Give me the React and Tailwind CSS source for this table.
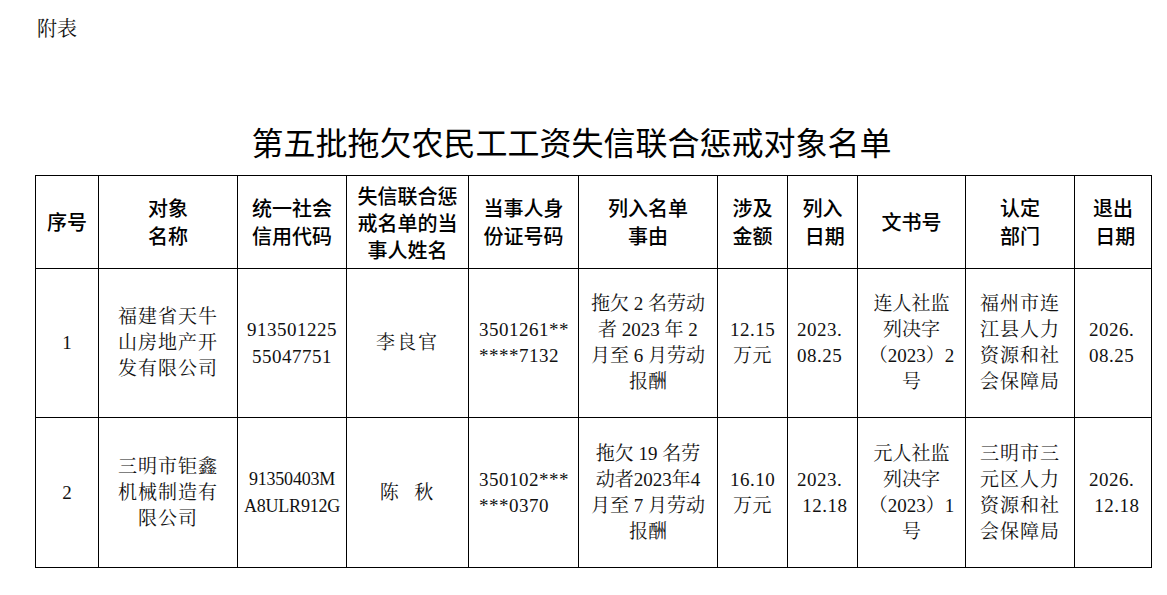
const serif = { fontFamily: '"Liberation Serif", "Noto Serif CJK SC", "Noto Sans CJK SC", serif' };

const cols = [63, 139, 109, 122, 110, 139, 70, 70, 108, 109, 77];

const rows = [
  {
    no: "1",
    name: ["福建省天牛", "山房地产开", "发有限公司"],
    code: ["913501225", "55047751"],
    codeSize: " tracking-[0.5px]",
    person: "李良官",
    id: ["3501261**", "****7132"],
    reason: ["拖欠 2 名劳动", "者 2023 年 2", "月至 6 月劳动", "报酬"],
    amount: ["12.15", "万元"],
    date: ["2023.", "08.25"],
    doc: ["连人社监", "列决字", "（2023）2", "号"],
    dept: ["福州市连", "江县人力", "资源和社", "会保障局"],
    exit: ["2026.", "08.25"],
  },
  {
    no: "2",
    name: ["三明市钜鑫", "机械制造有", "限公司"],
    code: ["91350403M", "A8ULR912G"],
    codeSize: " !text-[18px] tracking-[-0.2px]",
    person: "陈\u00a0\u00a0秋",
    id: ["350102***", "***0370"],
    reason: ["拖欠 19 名劳", "动者2023年4", "月至 7 月劳动", "报酬"],
    amount: ["16.10", "万元"],
    date: ["2023.", "\u00a012.18"],
    doc: ["元人社监", "列决字", "（2023）1", "号"],
    dept: ["三明市三", "元区人力", "资源和社", "会保障局"],
    exit: ["2026.", "\u00a012.18"],
  },
];

function Lines({ items }) {
  return items.map((t, i) => <div key={i}>{t}</div>);
}

const th = "border border-black text-center align-middle font-medium text-[20px] leading-[28px] text-black";
const td = "border border-black align-middle text-[19px] leading-[26px] text-[#111]";

export default function App() {
  return (
    <div className="min-h-screen bg-white" style={{ fontFamily: '"Noto Sans CJK SC", sans-serif' }}>
      <p className="pl-[37px] pt-[16px] text-[20px] leading-[26px] text-[#111]" style={serif}>附表</p>
      <h1 className="mt-[79px] pr-[24px] text-center text-[32px] leading-[40px] font-normal text-black">
        第五批拖欠农民工工资失信联合惩戒对象名单
      </h1>
      <table className="mt-[14px] ml-[35px] w-[1117px] table-fixed border-collapse">
        <colgroup>
          {cols.map((w, i) => (
            <col key={i} style={{ width: w }} />
          ))}
        </colgroup>
        <thead>
          <tr className="h-[93px]">
            <th className={th}>序号</th>
            <th className={th}><Lines items={["对象", "名称"]} /></th>
            <th className={th}><Lines items={["统一社会", "信用代码"]} /></th>
            <th className={th + " !leading-[27px]"}><Lines items={["失信联合惩", "戒名单的当", "事人姓名"]} /></th>
            <th className={th}><Lines items={["当事人身", "份证号码"]} /></th>
            <th className={th}><Lines items={["列入名单", "事由"]} /></th>
            <th className={th}><Lines items={["涉及", "金额"]} /></th>
            <th className={th}><Lines items={["列入", "\u00a0日期"]} /></th>
            <th className={th}>文书号</th>
            <th className={th}><Lines items={["认定", "部门"]} /></th>
            <th className={th}><Lines items={["退出", "\u00a0日期"]} /></th>
          </tr>
        </thead>
        <tbody style={serif}>
          {rows.map((r, i) => (
            <tr key={r.no} className={i === 0 ? "h-[149px]" : "h-[150px]"}>
              <td className={td + " text-center"}>{r.no}</td>
              <td className={td + " text-center tracking-[1px]"}><Lines items={r.name} /></td>
              <td className={td + " text-center !leading-[27px]" + r.codeSize}><Lines items={r.code} /></td>
              <td className={td + " text-center tracking-[2px]"}>{r.person}</td>
              <td className={td + " pl-[10px] text-left tracking-[0.5px]"}><Lines items={r.id} /></td>
              <td className={td + " text-center"}><Lines items={r.reason} /></td>
              <td className={td + " text-center tracking-[0.5px]"}><Lines items={r.amount} /></td>
              <td className={td + " pl-[9px] text-left tracking-[0.5px]"}><Lines items={r.date} /></td>
              <td className={td + " text-center"}><Lines items={r.doc} /></td>
              <td className={td + " text-center tracking-[1px]"}><Lines items={r.dept} /></td>
              <td className={td + " pl-[14px] text-left tracking-[0.5px]"}><Lines items={r.exit} /></td>
            </tr>
          ))}
        </tbody>
      </table>
    </div>
  );
}
